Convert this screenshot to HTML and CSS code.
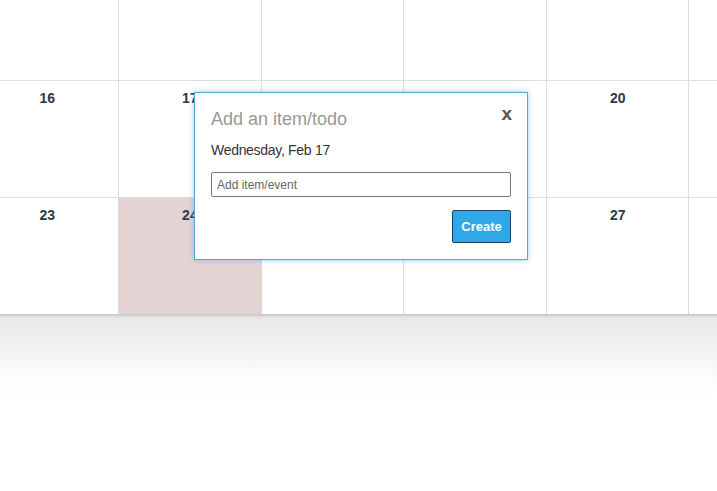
FILE: index.html
```html
<!DOCTYPE html>
<html>
<head>
<meta charset="utf-8">
<link rel="stylesheet" href="styles.css">
</head>
<body>
<div class="page">
  <div class="calendar">
    <div class="cell"></div>
    <div class="cell"></div>
    <div class="cell"></div>
    <div class="cell"></div>
    <div class="cell"></div>
    <div class="cell"></div>
    <div class="cell"><span class="num">16</span></div>
    <div class="cell"><span class="num">17</span></div>
    <div class="cell"><span class="num">18</span></div>
    <div class="cell"><span class="num">19</span></div>
    <div class="cell"><span class="num">20</span></div>
    <div class="cell"></div>
    <div class="cell"><span class="num">23</span></div>
    <div class="cell today"><span class="num">24</span></div>
    <div class="cell"><span class="num">25</span></div>
    <div class="cell"><span class="num">26</span></div>
    <div class="cell"><span class="num">27</span></div>
    <div class="cell"></div>
  </div>
  <div class="below"></div>

  <div class="popup">
    <span class="close">x</span>
    <h2 class="title">Add an item/todo</h2>
    <p class="date">Wednesday, Feb 17</p>
    <input class="field" type="text" placeholder="Add item/event">
    <div class="actions">
      <button class="create">Create</button>
    </div>
  </div>
</div>
</body>
</html>
```
FILE: styles.css
```css
html, body {
  margin: 0;
  padding: 0;
  background: #fff;
  overflow: hidden;
  font-family: "Liberation Sans", Arial, sans-serif;
}

.page {
  position: relative;
  width: 717px;
  height: 491px;
  overflow: hidden;
}

.calendar {
  display: grid;
  grid-template-columns: repeat(6, 142.6px);
  grid-template-rows: 117px 117px 116px;
  margin-left: -23.5px;
  margin-top: -36px;
  width: 855.6px;
  position: relative;
  z-index: 1;
  background: #fff;
  box-shadow: 0 1px 3px rgba(0, 0, 0, 0.22);
}

.cell {
  box-sizing: border-box;
  border-right: 1px solid #dddddd;
  border-bottom: 1px solid #dddddd;
  padding-top: 8px;
  text-align: center;
}

.cell:nth-last-child(-n+6) {
  border-bottom: none;
}

.cell.today {
  background: #e3d3d3;
  border-right-color: #e3d3d3;
}

.num {
  font-size: 14px;
  font-weight: bold;
  color: #2c3a48;
  line-height: 16px;
}

.below {
  height: 180px;
  background: linear-gradient(#e6e6e6 0, #f3f3f3 35px, #fcfcfc 65px, #ffffff 85px);
}

.popup {
  position: absolute;
  left: 194px;
  top: 92px;
  z-index: 5;
  box-sizing: border-box;
  width: 334px;
  height: 168px;
  padding: 16px 16px 0 16px;
  background: #fff;
  border: 1px solid #4ea9d8;
  box-shadow: 0 0 5px rgba(60, 160, 225, 0.55);
}

.close {
  position: absolute;
  top: 10px;
  right: 15px;
  font-size: 19px;
  font-weight: bold;
  color: #555;
  line-height: 21px;
}

.title {
  margin: 0;
  font-size: 18px;
  font-weight: normal;
  line-height: 21px;
  color: #999999;
}

.date {
  margin: 12px 0 0 0;
  font-size: 14px;
  line-height: 16px;
  color: #333;
  letter-spacing: -0.3px;
}

.field {
  display: block;
  box-sizing: border-box;
  margin: 14px 0 0 0;
  width: 300px;
  height: 25px;
  padding: 0 5px;
  border: 1px solid #777;
  border-radius: 2px;
  font-family: "Liberation Sans", Arial, sans-serif;
  font-size: 12px;
  color: #333;
  outline: none;
}

.field::placeholder {
  color: #666;
}

.actions {
  display: flex;
  justify-content: flex-end;
  margin-top: 13px;
}

.create {
  box-sizing: border-box;
  width: 59px;
  height: 33px;
  padding: 0;
  background: #2fa8e8;
  border: 1px solid #1f3f5c;
  border-radius: 2px;
  color: #fff;
  font-family: "Liberation Sans", Arial, sans-serif;
  font-size: 13px;
  font-weight: bold;
}
```
